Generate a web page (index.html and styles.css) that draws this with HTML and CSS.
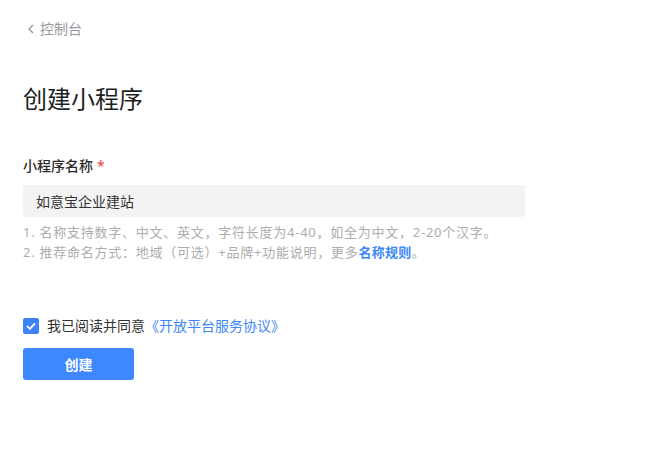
FILE: index.html
```html
<!DOCTYPE html>
<html lang="zh-CN">
<head>
    <meta charset="UTF-8">
    <meta name="viewport" content="width=device-width, initial-scale=1.0">
    <title>创建小程序</title>
    <link rel="stylesheet" href="styles.css">
</head>
<body>
    <div class="page">
        <a class="back-link" href="#">
            <svg class="back-icon" width="8" height="10" viewBox="0 0 8 10">
                <path d="M6 1 L2 5 L6 9" fill="none" stroke="#999" stroke-width="1.4"/>
            </svg>
            控制台
        </a>

        <h1 class="title">创建小程序</h1>

        <div class="form-item">
            <label class="form-label">小程序名称<span class="required">*</span></label>
            <input class="form-input" type="text" value="如意宝企业建站">
            <div class="form-help">
                <p>1. 名称支持数字、中文、英文，字符长度为4-40，如全为中文，2-20个汉字。</p>
                <p>2. 推荐命名方式：地域（可选）+品牌+功能说明，更多<a href="#" class="help-link">名称规则</a>。</p>
            </div>
        </div>

        <div class="agree">
            <span class="checkbox">
                <svg width="10" height="8" viewBox="0 0 10 8">
                    <path d="M1 4 L4 6.8 L9 1.3" fill="none" stroke="#fff" stroke-width="1.8"/>
                </svg>
            </span>
            <span class="agree-text">我已阅读并同意</span><a href="#" class="agree-link">《开放平台服务协议》</a>
        </div>

        <button class="btn-primary">创建</button>
    </div>
</body>
</html>
```

FILE: styles.css
```css
body {
    margin: 0;
    background: #fff;
    color: #333;
    font-family: "Noto Sans", "Noto Sans CJK SC", sans-serif;
}
.page {
    padding: 18px 23px;
}
.back-link {
    display: flex;
    align-items: center;
    gap: 5px;
    color: #999;
    font-size: 14px;
    line-height: 22px;
    text-decoration: none;
}
.back-icon {
    margin-left: 4px;
}
.title {
    margin: 42px 0 0;
    font-size: 24px;
    font-weight: 400;
    line-height: 34px;
    color: #1f1f1f;
}
.form-item {
    margin-top: 40px;
}
.form-label {
    display: block;
    font-size: 14px;
    font-weight: 500;
    line-height: 20px;
    color: #2a2a2a;
}
.required {
    color: #f04c4c;
    margin-left: 4px;
}
.form-input {
    display: block;
    box-sizing: border-box;
    margin-top: 9px;
    width: 502px;
    height: 32px;
    padding: 0 13px;
    border: none;
    border-radius: 3px;
    background: #f3f3f3;
    font-family: inherit;
    font-size: 14px;
    color: #333;
    outline: none;
}
.form-help {
    margin-top: 5px;
    font-size: 13px;
    letter-spacing: 0.75px;
    line-height: 20px;
    color: #adadad;
}
.form-help p {
    margin: 0;
}
.help-link {
    color: #3d88f5;
    font-weight: 700;
    letter-spacing: 0.3px;
    text-decoration: none;
}
.agree {
    display: flex;
    align-items: center;
    margin-top: 54px;
    font-size: 14px;
    line-height: 20px;
}
.checkbox {
    display: flex;
    align-items: center;
    justify-content: center;
    width: 16px;
    height: 16px;
    border-radius: 2px;
    background: #3d82f7;
    margin-right: 8px;
}
.agree-text {
    color: #333;
}
.agree-link {
    color: #3d88f5;
    text-decoration: none;
}
.btn-primary {
    display: block;
    margin-top: 12px;
    width: 111px;
    height: 32px;
    border: none;
    border-radius: 3px;
    background: #3d88ff;
    color: #fff;
    font-family: inherit;
    font-size: 14px;
    font-weight: 700;
    cursor: pointer;
}
```
